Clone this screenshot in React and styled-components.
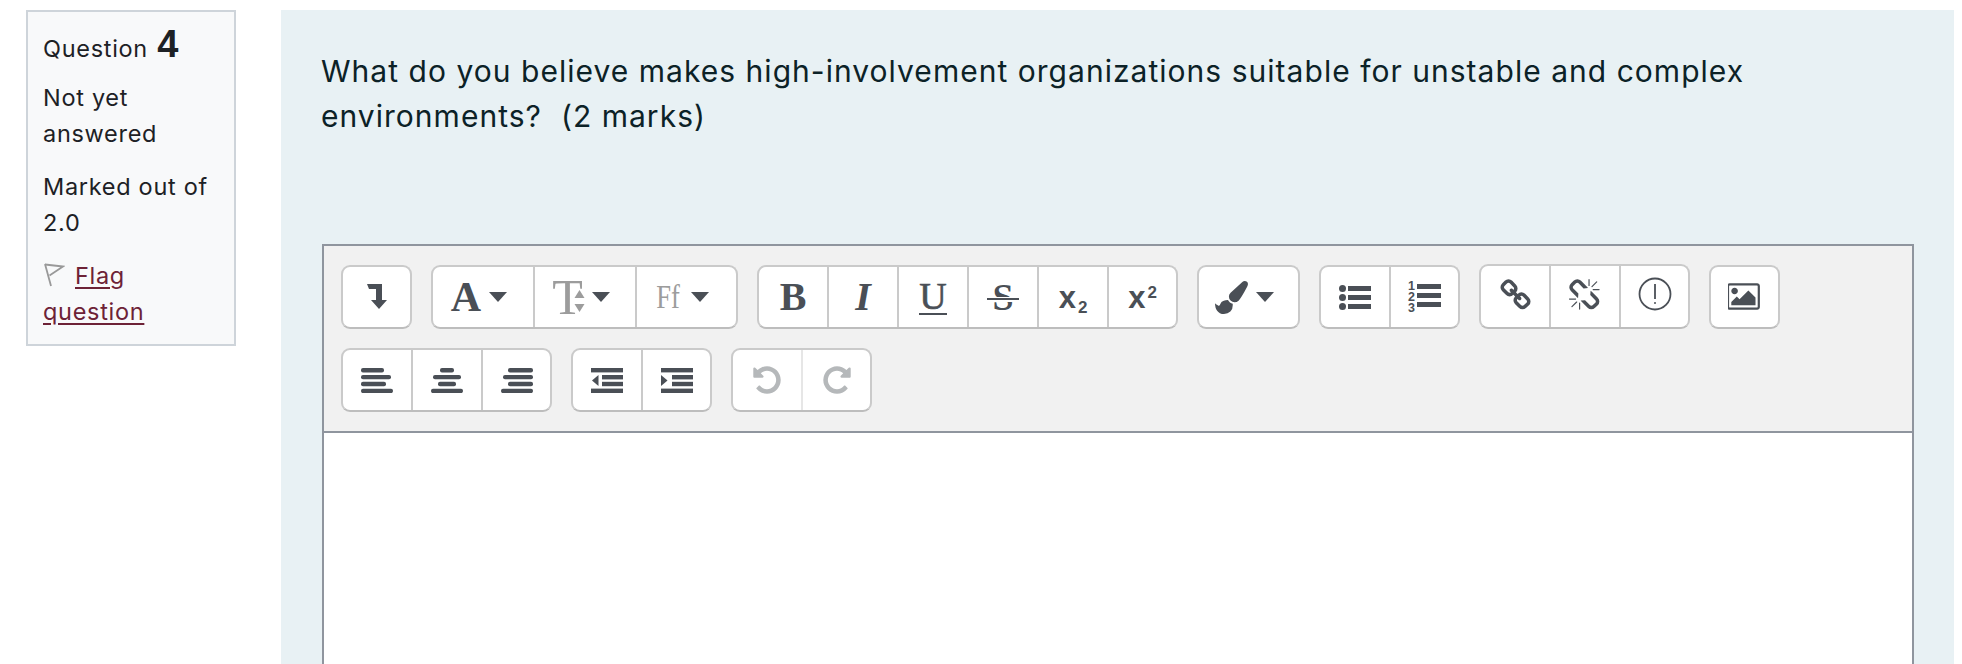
import React from 'react';
import styled, { createGlobalStyle } from 'styled-components';

const ICON = '#4a4f56';
const MUTED = '#9c9c9c';
const DISABLED = '#b5b8ba';

const GlobalStyle = createGlobalStyle`
  html, body {
    margin: 0;
    height: 100%;
    overflow: hidden;
    background: #ffffff;
  }
  * {
    box-sizing: border-box;
  }
`;

const Page = styled.div`
  display: flex;
  align-items: stretch;
  gap: 45px;
  height: 100vh;
  padding: 10px 8px 0 26px;
  font-family: Inter, "Liberation Sans", sans-serif;
  color: #1d2125;
  overflow: hidden;
`;

const InfoBox = styled.aside`
  flex: 0 0 210px;
  align-self: flex-start;
  height: 336px;
  padding: 11px 12px 0 15px;
  background: #f8f9fa;
  border: 2px solid #ced4da;
  font-size: 23.5px;
  line-height: 36px;
  letter-spacing: 0.7px;
`;

const QuestionNo = styled.h3`
  margin: 0 0 10px;
  font-size: 23.5px;
  font-weight: 400;
  line-height: 42px;
`;

const QuestionNumber = styled.span`
  font-family: "Liberation Sans", sans-serif;
  font-size: 38px;
  font-weight: 700;
  letter-spacing: 0;
  margin-left: 2px;
`;

const InfoLine = styled.div`
  margin-bottom: 17px;
`;

const FlagLink = styled.a`
  color: #6d2236;
  text-decoration: underline;
  text-underline-offset: 3px;
`;

const FlagIcon = styled.svg`
  width: 22px;
  height: 24px;
  margin-right: 10px;
  vertical-align: -3px;
`;

const Panel = styled.main`
  flex: 1;
  min-width: 0;
  padding: 39px 40px 0 41px;
  background: #e8f1f4;
  overflow: hidden;
`;

const QuestionText = styled.p`
  margin: 0 0 105px -1px;
  font-size: 30px;
  line-height: 45px;
  letter-spacing: 1.03px;
  color: #0c2227;
`;

const Editor = styled.div`
  border: 2px solid #8f959e;
  background: #ffffff;
  min-height: 600px;
`;

const Toolbar = styled.div`
  display: flex;
  flex-direction: column;
  gap: 19px;
  padding: 19px 17px;
  background: #f1f1f1;
  border-bottom: 2px solid #8f959e;
`;

const ToolRow = styled.div`
  display: flex;
  gap: 19px;
`;

const Group = styled.div`
  display: flex;
  height: ${p => (p.$raised ? 65 : 64)}px;
  margin-top: ${p => (p.$raised ? -1 : 0)}px;
  background: #ffffff;
  border: 2px solid #cacaca;
  border-bottom-color: #bdbdbd;
  border-radius: 9px;
`;

const ToolBtn = styled.button`
  display: flex;
  align-items: center;
  justify-content: center;
  gap: ${p => (p.$wide ? '8px' : '0')};
  width: ${p => (p.$wide ? 102 : 70)}px;
  padding: 0 ${p => (p.$wide ? '8px' : '0')} 0 0;
  margin: 0;
  background: none;
  border: none;
  border-right: 2px solid ${p => (p.$soft ? '#e6e6e6' : '#cacaca')};
  color: ${ICON};
  &:last-child {
    width: ${p => (p.$wide ? 99 : 67)}px;
    border-right: none;
  }
`;

const Caret = styled.span`
  flex: none;
  width: 0;
  height: 0;
  border-left: 9px solid transparent;
  border-right: 9px solid transparent;
  border-top: 10px solid ${ICON};
`;

const Glyph = styled.span`
  font-family: "Liberation Serif", serif;
  font-size: ${p => p.$size || 40}px;
  font-weight: ${p => p.$weight || 700};
  font-style: ${p => (p.$italic ? 'italic' : 'normal')};
  line-height: 1;
  color: ${p => (p.$muted ? MUTED : ICON)};
`;

const NarrowGlyph = styled(Glyph)`
  display: inline-block;
  margin: 0 -1px 0 -3px;
  transform: scaleX(0.78);
`;

const UnderGlyph = styled(Glyph)`
  border-bottom: 2px solid ${ICON};
  line-height: 33px;
  -webkit-text-stroke: 0.6px ${ICON};
`;

const StrikeGlyph = styled(Glyph)`
  position: relative;
  padding: 0 5px;
  &::after {
    content: '';
    position: absolute;
    left: 0;
    right: 0;
    top: 20px;
    height: 2px;
    background: ${ICON};
    box-shadow: 0 -1px 0 #ffffff, 0 2px 0 #ffffff;
  }
`;

const SizeArrows = styled.svg`
  flex: none;
  width: 11px;
  height: 22px;
  margin: 8px -1px 0 -17px;
`;

const ScriptX = styled.span`
  font-family: "Liberation Sans", sans-serif;
  font-size: 31px;
  font-weight: 700;
  line-height: 1;
  white-space: nowrap;
  color: ${ICON};
`;

const ScriptDigit = styled.span`
  margin-left: 2px;
  font-size: 17px;
  line-height: 0;
  vertical-align: ${p => (p.$up ? '10px' : '-5px')};
`;

const LiftedIcon = styled.svg`
  margin-bottom: ${p => p.$lift || 0}px;
`;

const EditorBody = styled.div`
  height: 400px;
  background: #ffffff;
`;

const FaIcon = ({ d, size = 32, color = ICON, vb = '0 0 1792 1792', mirror, lift }) => (
  <LiftedIcon $lift={lift} width={size} height={size} viewBox={vb} fill={color} style={mirror ? { transform: 'scaleX(-1)' } : undefined}>
    <path d={d} />
  </LiftedIcon>
);

const UNDO = 'M1664 896q0 156-61 298t-164 245-245 164-298 61q-172 0-327-72.500t-264-204.500q-7-10-6.500-22.500t8.500-20.500l137-138q10-9 25-9 16 2 23 12 73 95 179 147t225 52q104 0 198.500-40.500t163.500-109.500 109.500-163.500 40.500-198.500-40.500-198.500-109.500-163.500-163.500-109.500-198.500-40.500q-98 0-188 35.500t-160 101.500l137 138q31 30 14 69-17 40-59 40h-448q-26 0-45-19t-19-45v-448q0-42 40-59 39-17 69 14l130 129q107-101 244.500-156.500t284.500-55.500q156 0 298 61t245 164 164 245 61 298z';
const BRUSH = 'M1615 0q70 0 122.500 46.500t52.500 116.500q0 63-45 151-332 629-465 752-97 91-218 91-126 0-216.500-92.500t-90.500-219.500q0-128 92-212l638-579q59-54 130-54zm-909 1034q39 76 106.500 130t150.500 76l1 71q4 213-129.500 347t-348.500 134q-123 0-218-46.500t-152.500-127.500-86.500-183-29-220q7 5 41 30t62 44.500 59 36.500 46 17q41 0 55-37 25-66 57.500-112.500t69.500-76 88-47.500 103-25.500 125-10.500z';
const LINK = 'M1520 1216q0-40-28-68l-208-208q-28-28-68-28-42 0-72 32 3 3 19 18.500t21.500 21.500 15 19 13 25.500 3.500 27.500q0 40-28 68t-68 28q-15 0-27.500-3.500t-25.500-13-19-15-21.500-21.500-18.500-19q-33 31-33 73 0 40 28 68l206 207q27 27 68 27 40 0 68-26l147-146q28-28 28-67zm-703-705q0-40-28-68l-206-207q-28-28-68-28-39 0-68 27l-147 146q-28 28-28 67 0 40 28 68l208 208q27 27 68 27 42 0 72-31-3-3-19-18.500t-21.500-21.500-15-19-13-25.500-3.500-27.500q0-40 28-68t68-28q15 0 27.500 3.500t25.500 13 19 15 21.500 21.500 18.500 19q33-31 33-73zm895 705q0 120-85 203l-147 146q-83 83-203 83-121 0-204-85l-206-207q-83-83-83-203 0-123 88-209l-88-88q-86 88-208 88-120 0-204-84l-208-208q-84-84-84-204t85-203l147-146q83-83 203-83 121 0 204 85l206 207q83 83 83 203 0 123-88 209l88 88q86-88 208-88 120 0 204 84l208 208q84 84 84 204z';
const UNLINK = 'M439 1271l-256 256q-11 9-23 9t-23-9q-9-10-9-23t9-23l256-256q10-9 23-9t23 9q9 10 9 23t-9 23zm169 41v320q0 14-9 23t-23 9-23-9-9-23v-320q0-14 9-23t23-9 23 9 9 23zm-224-224q0 14-9 23t-23 9h-320q-14 0-23-9t-9-23 9-23 23-9h320q14 0 23 9t9 23zm1264 128q0 120-85 203l-147 146q-83 83-203 83-121 0-204-85l-334-335q-21-21-42-56l239-18 273 274q27 27 68 27.500t68-26.500l147-146q28-28 28-67 0-40-28-68l-274-275 18-239q35 21 56 42l336 336q84 86 84 204zm-617-724l-239 18-273-274q-28-28-68-28-39 0-68 27l-147 146q-28 28-28 67 0 40 28 68l274 274-18 240q-35-21-56-42l-336-336q-84-86-84-204 0-120 85-203l147-146q83-83 203-83 121 0 204 85l334 335q21 21 42 56zm633 84q0 14-9 23t-23 9h-320q-14 0-23-9t-9-23 9-23 23-9h320q14 0 23 9t9 23zm-544-544v320q0 14-9 23t-23 9-23-9-9-23v-320q0-14 9-23t23-9 23 9 9 23zm407 151l-256 256q-11 9-23 9t-23-9q-9-10-9-23t9-23l256-256q10-9 23-9t23 9q9 10 9 23t-9 23z';
const PICTURE = 'M576 576q0 80-56 136t-136 56-136-56-56-136 56-136 136-56 136 56 56 136zm1024 384v448h-1408v-192l320-320 160 160 512-512zm96-704h-1600q-13 0-22.500 9.500t-9.500 22.500v1216q0 13 9.500 22.500t22.500 9.500h1600q13 0 22.500-9.500t9.500-22.500v-1216q0-13-9.500-22.500t-22.500-9.500zm160 32v1216q0 66-47 113t-113 47h-1600q-66 0-113-47t-47-113v-1216q0-66 47-113t113-47h1600q66 0 113 47t47 113z';

const Bars = ({ bars }) => (
  <svg width="32" height="25" viewBox="0 0 32 25" fill={ICON}>
    {bars.map(([x, w], i) => (
      <rect key={i} x={x} y={i * 6.9} width={w} height="4.400" rx="2" />
    ))}
  </svg>
);

const IndentIcon = ({ out }) => (
  <svg width="32" height="25" viewBox="0 0 32 25" fill={ICON}>
    <rect width="32" height="4.400" />
    <rect x="11" y="7" width="21" height="4.400" />
    <rect x="11" y="13.800" width="21" height="4.400" />
    <rect y="20.600" width="32" height="4.400" />
    <path d={out ? 'M7.500 7v11L1 12.500z' : 'M0 7v11l6.500-5.500z'} />
  </svg>
);

const EnterIcon = () => (
  <svg width="20" height="26" viewBox="0 0 20 26" fill={ICON}>
    <path d="M0 0h15v16h5l-8 9-8-9h5V5H2z" />
  </svg>
);

const BulletIcon = () => (
  <svg width="32" height="25" viewBox="0 0 32 25" fill={ICON}>
    <circle cx="3.500" cy="3.500" r="3.500" />
    <circle cx="3.500" cy="12.500" r="3.500" />
    <circle cx="3.500" cy="21.500" r="3.500" />
    <rect x="9" y="1" width="23" height="5" />
    <rect x="9" y="10" width="23" height="5" />
    <rect x="9" y="19" width="23" height="5" />
  </svg>
);

const NumberIcon = () => (
  <svg width="33" height="32" viewBox="0 0 33 32" fill={ICON} overflow="visible">
    <text x="0" y="9" fontFamily="Liberation Sans" fontWeight="700" fontSize="12.500">1</text>
    <text x="0" y="20" fontFamily="Liberation Sans" fontWeight="700" fontSize="12.500">2</text>
    <text x="0" y="31" fontFamily="Liberation Sans" fontWeight="700" fontSize="12.500">3</text>
    <rect x="9" y="3" width="24" height="5" />
    <rect x="9" y="12" width="24" height="5" />
    <rect x="9" y="21" width="24" height="5" />
  </svg>
);

const WarnIcon = () => (
  <LiftedIcon $lift={6} width="34" height="34" viewBox="0 0 34 34" fill="none" stroke={ICON} strokeWidth="1.800">
    <circle cx="17" cy="17" r="15.500" />
    <path d="M17 7v15" />
    <circle cx="17" cy="26" r="1" fill={ICON} stroke="none" />
  </LiftedIcon>
);

const QuestionInfo = () => (
  <InfoBox>
    <QuestionNo>
      Question <QuestionNumber>4</QuestionNumber>
    </QuestionNo>
    <InfoLine>Not yet answered</InfoLine>
    <InfoLine>Marked out of 2.0</InfoLine>
    <InfoLine>
      <FlagIcon viewBox="0 0 22 24" fill="none" stroke="#999999" strokeWidth="1.800">
        <path d="M2 1l6 22" />
        <path d="M2 1.500l18 2-13.500 9" />
      </FlagIcon>
      <FlagLink href="#">Flag question</FlagLink>
    </InfoLine>
  </InfoBox>
);

const AttoToolbar = () => (
  <Toolbar>
    <ToolRow>
      <Group>
        <ToolBtn><EnterIcon /></ToolBtn>
      </Group>
      <Group>
        <ToolBtn $wide><Glyph $size={42}>A</Glyph><Caret /></ToolBtn>
        <ToolBtn $wide>
          <Glyph $size={50} $weight={400} $muted>T</Glyph>
          <SizeArrows viewBox="0 0 11 22" fill={MUTED}>
            <path d="M5.500 0L10.500 8H.5zM.5 14h10L5.500 22z" />
          </SizeArrows>
          <Caret />
        </ToolBtn>
        <ToolBtn $wide><NarrowGlyph $size={34} $weight={400} $muted>Ff</NarrowGlyph><Caret /></ToolBtn>
      </Group>
      <Group>
        <ToolBtn><Glyph>B</Glyph></ToolBtn>
        <ToolBtn><Glyph $italic>I</Glyph></ToolBtn>
        <ToolBtn><UnderGlyph $size={38} $weight={400}>U</UnderGlyph></ToolBtn>
        <ToolBtn><StrikeGlyph $size={38} $weight={700}>S</StrikeGlyph></ToolBtn>
        <ToolBtn><ScriptX>x<ScriptDigit>2</ScriptDigit></ScriptX></ToolBtn>
        <ToolBtn><ScriptX>x<ScriptDigit $up>2</ScriptDigit></ScriptX></ToolBtn>
      </Group>
      <Group>
        <ToolBtn $wide><FaIcon d={BRUSH} size={33} /><Caret /></ToolBtn>
      </Group>
      <Group>
        <ToolBtn><BulletIcon /></ToolBtn>
        <ToolBtn><NumberIcon /></ToolBtn>
      </Group>
      <Group $raised>
        <ToolBtn><FaIcon d={LINK} size={33} lift={2} /></ToolBtn>
        <ToolBtn><FaIcon d={UNLINK} size={33} lift={3} /></ToolBtn>
        <ToolBtn><WarnIcon /></ToolBtn>
      </Group>
      <Group>
        <ToolBtn><FaIcon d={PICTURE} size={33} vb="0 0 1920 1792" lift={2} /></ToolBtn>
      </Group>
    </ToolRow>
    <ToolRow>
      <Group>
        <ToolBtn><Bars bars={[[0, 23], [0, 30], [0, 25], [0, 32]]} /></ToolBtn>
        <ToolBtn><Bars bars={[[9, 14], [2, 28], [7, 18], [0, 32]]} /></ToolBtn>
        <ToolBtn><Bars bars={[[7, 25], [2, 30], [7, 25], [0, 32]]} /></ToolBtn>
      </Group>
      <Group>
        <ToolBtn><IndentIcon out /></ToolBtn>
        <ToolBtn><IndentIcon /></ToolBtn>
      </Group>
      <Group>
        <ToolBtn $soft><FaIcon d={UNDO} size={32} color={DISABLED} /></ToolBtn>
        <ToolBtn $soft><FaIcon d={UNDO} size={32} color={DISABLED} mirror /></ToolBtn>
      </Group>
    </ToolRow>
  </Toolbar>
);

export default function App() {
  return (
    <>
      <GlobalStyle />
      <Page>
        <QuestionInfo />
        <Panel>
          <QuestionText>
            What do you believe makes high-involvement organizations suitable for unstable and complex environments?&nbsp; (2 marks)
          </QuestionText>
          <Editor>
            <AttoToolbar />
            <EditorBody />
          </Editor>
        </Panel>
      </Page>
    </>
  );
}
